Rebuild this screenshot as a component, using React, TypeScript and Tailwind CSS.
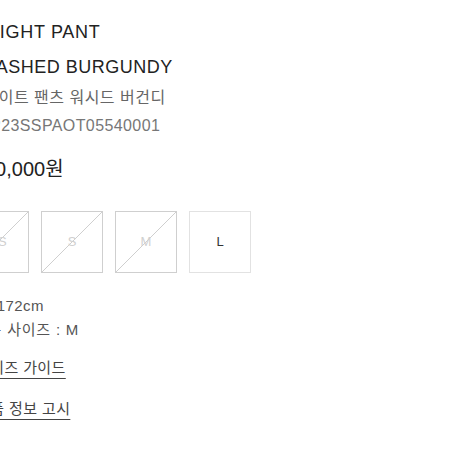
const sizes = [
  { label: "XS", soldOut: true },
  { label: "S", soldOut: true },
  { label: "M", soldOut: true },
  { label: "L", soldOut: false },
];

function SizeBox({ label, soldOut }: { label: string; soldOut: boolean }) {
  return (
    <div
      className={`relative flex h-[62px] w-[62px] shrink-0 items-center justify-center border ${
        soldOut ? "border-[#cfcfcf]" : "border-[#e2e2e2]"
      }`}
    >
      <span className={`text-[13px] ${soldOut ? "text-[#d0d0d0]" : "text-[#333]"}`}>{label}</span>
      {soldOut && (
        <svg className="absolute inset-0 h-full w-full" viewBox="0 0 60 60" preserveAspectRatio="none">
          <line x1="0" y1="60" x2="60" y2="0" stroke="#cfcfcf" strokeWidth="1" />
        </svg>
      )}
    </div>
  );
}

export default function App() {
  return (
    <div
      className="h-[454px] w-[454px] overflow-hidden bg-white text-[#222]"
      style={{ fontFamily: '"Liberation Sans", "Noto Sans CJK KR", sans-serif' }}
    >
      <div className="pt-[15px]">
        {/* Title */}
        <div className="-ml-[51px] whitespace-nowrap text-[18px] leading-[35px] tracking-[0.7px] text-[#222]">
          STRAIGHT PANT
        </div>
        <div className="-ml-[21px] whitespace-nowrap text-[18px] leading-[35px] tracking-[0.5px] text-[#222]">
          WASHED BURGUNDY
        </div>
        <div className="-ml-[47px] mt-[-2px] whitespace-nowrap text-[16px] leading-[30px] tracking-[0.5px] text-[#666]">
          스트레이트 팬츠 워시드 버건디
        </div>
        <div className="-ml-[21px] mt-[-2px] whitespace-nowrap text-[16px] leading-[30px] tracking-[0.4px] text-[#777]">
          SP23SSPAOT05540001
        </div>

        {/* Price */}
        <div className="-ml-[16px] mt-[12px] whitespace-nowrap text-[20px] leading-[32px] text-[#222]">
          30,000원
        </div>

        {/* Sizes */}
        <div className="-ml-[33px] mt-[26px] flex gap-[12px]">
          {sizes.map((s) => (
            <SizeBox key={s.label} label={s.label} soldOut={s.soldOut} />
          ))}
        </div>

        {/* Model info */}
        <div className="mt-[21px] text-[15px] leading-[24px] tracking-[0.4px] text-[#555]">
          <div className="-ml-[22px] whitespace-nowrap">키 172cm</div>
          <div className="-ml-[27px] whitespace-nowrap tracking-[0.8px]">착용 사이즈 : M</div>
        </div>

        <div className="mt-[15px] flex flex-col items-start gap-[19px] text-[15px] leading-[22px] tracking-[0.4px] text-[#444]">
          <span className="-ml-[24px] whitespace-nowrap underline underline-offset-[5px]">사이즈 가이드</span>
          <span className="-ml-[24px] whitespace-nowrap underline underline-offset-[5px]">상품 정보 고시</span>
        </div>
      </div>
    </div>
  );
}
